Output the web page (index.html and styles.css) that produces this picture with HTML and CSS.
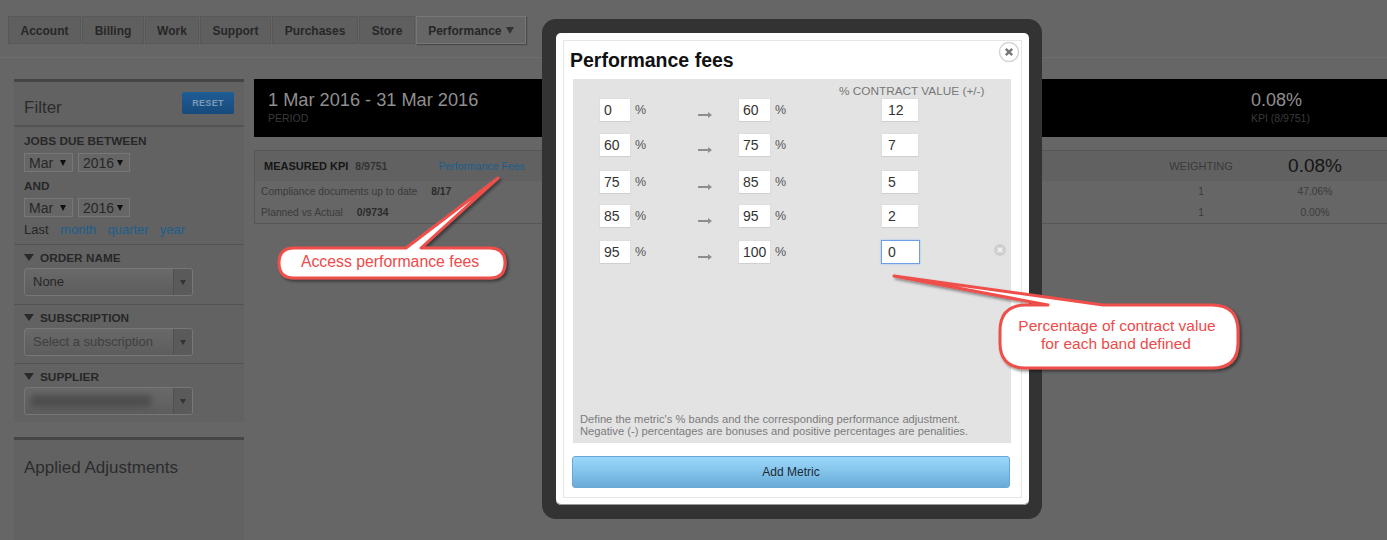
FILE: index.html
```html
<!DOCTYPE html>
<html lang="en">
<head>
<meta charset="utf-8">
<title>Performance fees</title>
<link rel="stylesheet" href="styles.css">
</head>
<body>
<nav class="nav">
  <a class="tab tab-account">Account</a>
  <a class="tab tab-billing">Billing</a>
  <a class="tab tab-work">Work</a>
  <a class="tab tab-support">Support</a>
  <a class="tab tab-purchases">Purchases</a>
  <a class="tab tab-store">Store</a>
  <a class="tab tab-active">Performance <i class="tri tri-tab"></i></a>
</nav>
<div class="main">
  <aside class="side">
    <section class="card">
      <div class="filter-head"><h2 class="side-title">Filter</h2><button class="reset">RESET</button></div>
      <div class="dates">
        <div class="label">JOBS DUE BETWEEN</div>
        <div class="date-row"><span class="mini mini-m">Mar<i class="tri tri-mini"></i></span><span class="mini mini-y">2016<i class="tri tri-mini"></i></span></div>
        <div class="label label-and">AND</div>
        <div class="date-row"><span class="mini mini-m">Mar<i class="tri tri-mini"></i></span><span class="mini mini-y">2016<i class="tri tri-mini"></i></span></div>
        <div class="last">Last <a>month</a> <a>quarter</a> <a>year</a></div>
      </div>
      <div class="group">
        <div class="label"><i class="tri tri-label"></i>ORDER NAME</div>
        <div class="combo"><span class="combo-val">None</span><span class="combo-btn"><i class="tri tri-combo"></i></span></div>
      </div>
      <div class="group">
        <div class="label"><i class="tri tri-label"></i>SUBSCRIPTION</div>
        <div class="combo"><span class="combo-val combo-ph">Select a subscription</span><span class="combo-btn"><i class="tri tri-combo"></i></span></div>
      </div>
      <div class="group">
        <div class="label"><i class="tri tri-label"></i>SUPPLIER</div>
        <div class="combo"><span class="combo-val"><span class="blurred"></span></span><span class="combo-btn"><i class="tri tri-combo"></i></span></div>
      </div>
    </section>
    <section class="card card-adj"><h2 class="side-title">Applied Adjustments</h2></section>
  </aside>
  <div class="content">
    <div class="hero">
      <div><div class="hero-big">1 Mar 2016 - 31 Mar 2016</div><div class="hero-small">PERIOD</div></div>
      <div class="hero-kpi"><div class="kpi-big">0.08%</div><div class="hero-small">KPI (8/9751)</div></div>
    </div>
    <div class="table">
      <div class="thead">
        <div class="cell-main"><b class="m-title">MEASURED KPI</b><b class="m-num">8/9751</b><a class="m-link">Performance Fees</a></div>
        <div class="cell-w cell-w-h">WEIGHTING</div>
        <div class="cell-p cell-p-h">0.08%</div>
      </div>
      <div class="trow">
        <div class="cell-main">Compliance documents up to date<b class="r-num">8/17</b></div>
        <div class="cell-w">1</div><div class="cell-p">47.06%</div>
      </div>
      <div class="trow">
        <div class="cell-main">Planned vs Actual<b class="r-num">0/9734</b></div>
        <div class="cell-w">1</div><div class="cell-p">0.00%</div>
      </div>
    </div>
  </div>
</div>

<div class="modal-frame">
  <div class="modal">
    <svg class="close" width="22" height="22" viewBox="0 0 22 22"><circle cx="11" cy="11" r="9.5" fill="#fff" stroke="#d6d6d6" stroke-width="1.6"/><path d="M7.8 7.8 14.2 14.2M14.2 7.8 7.8 14.2" stroke="#777" stroke-width="2.4"/></svg>
    <div class="modal-inner">
      <h1 class="modal-title">Performance fees</h1>
      <div class="panel">
        <div class="pct-head">% CONTRACT VALUE (+/-)</div>
        <div class="bands">
          <span class="pair"><span class="inp">0</span>%</span><svg class="arrow" width="14" height="6" viewBox="0 0 14 6"><path d="M0 2h10V0l4 3-4 3V4H0z" fill="#8e8e8e"/></svg><span class="pair"><span class="inp">60</span>%</span><span class="inp inp-c">12</span>
          <span class="pair"><span class="inp">60</span>%</span><svg class="arrow" width="14" height="6" viewBox="0 0 14 6"><path d="M0 2h10V0l4 3-4 3V4H0z" fill="#8e8e8e"/></svg><span class="pair"><span class="inp">75</span>%</span><span class="inp inp-c">7</span>
          <span class="pair"><span class="inp">75</span>%</span><svg class="arrow" width="14" height="6" viewBox="0 0 14 6"><path d="M0 2h10V0l4 3-4 3V4H0z" fill="#8e8e8e"/></svg><span class="pair"><span class="inp">85</span>%</span><span class="inp inp-c">5</span>
          <span class="pair"><span class="inp">85</span>%</span><svg class="arrow" width="14" height="6" viewBox="0 0 14 6"><path d="M0 2h10V0l4 3-4 3V4H0z" fill="#8e8e8e"/></svg><span class="pair"><span class="inp">95</span>%</span><span class="inp inp-c">2</span>
          <span class="pair"><span class="inp">95</span>%</span><svg class="arrow" width="14" height="6" viewBox="0 0 14 6"><path d="M0 2h10V0l4 3-4 3V4H0z" fill="#8e8e8e"/></svg><span class="pair"><span class="inp">100</span>%</span><span class="inp inp-c inp-focus">0<svg class="del" width="12" height="12" viewBox="0 0 12 12"><circle cx="6" cy="6" r="6" fill="#cfcfcf"/><path d="M3.8 3.8 8.2 8.2M8.2 3.8 3.8 8.2" stroke="#f1f1f1" stroke-width="1.8"/></svg></span>
        </div>
        <p class="note">Define the metric's % bands and the corresponding performance adjustment.<br>Negative (-) percentages are bonuses and positive percentages are penalities.</p>
      </div>
      <button class="add">Add Metric</button>
    </div>
  </div>
</div>

<svg class="annot" width="1387" height="540" viewBox="0 0 1387 540">
  <defs><filter id="sh" x="-20%" y="-20%" width="140%" height="140%"><feDropShadow dx="2" dy="2" stdDeviation="1.5" flood-color="#000" flood-opacity=".45"/></filter></defs>
  <path filter="url(#sh)" d="M498 178 421 248H490Q505 248 505 263 505 278 490 278H294Q279 278 279 263 279 248 294 248H406Z" fill="#fff" stroke="#ef4f4c" stroke-width="3" stroke-linejoin="round"/>
  <text class="ann-text" x="390" y="267" text-anchor="middle">Access performance fees</text>
  <path filter="url(#sh)" d="M894 276 1103 305H1212Q1238 305 1238 331V343Q1238 368 1212 368H1026Q1000 368 1000 343V331Q1000 305 1026 305H1048Z" fill="#fff" stroke="#ef4f4c" stroke-width="3" stroke-linejoin="round"/>
  <text class="ann-text ann-text2" x="1117" y="331" text-anchor="middle">Percentage of contract value</text>
  <text class="ann-text ann-text2" x="1116" y="349" text-anchor="middle">for each band defined</text>
</svg>
</body>
</html>
```
FILE: styles.css
```css
* { box-sizing: border-box; }
html, body { margin: 0; height: 540px; overflow: hidden; }
body { background: #666; font-family: "Liberation Sans", Arial, sans-serif; color: #222; position: relative; }
a { color: #1a5f8e; }

.nav { display: flex; gap: 1px; height: 58px; padding: 16px 0 0 8px; border-bottom: 1px solid #6e6e6e; }
.tab { height: 28px; line-height: 28px; background: #5f5f5f; border: 1px solid #585858; color: #272727; font-size: 12px; font-weight: bold; text-align: center; }
.tab-account { width: 73px; }
.tab-billing { width: 62px; }
.tab-work { width: 54px; }
.tab-support { width: 71px; }
.tab-purchases { width: 86px; }
.tab-store { width: 56px; }
.tab-active { width: 110px; background: #666; border: 1px solid #777; box-shadow: 1px 1px 1px #4a4a4a; color: #272727; }
.tri { display: inline-block; width: 0; height: 0; border-style: solid; border-color: #333 transparent transparent; }
.tri-tab { border-width: 7px 4.5px 0; margin-left: 1px; vertical-align: 1px; }
.tri-mini { border-width: 6px 3.5px 0; border-top-color: #111; }
.tri-label { border-width: 7px 5px 0; border-top-color: #2a2a2a; margin-right: 6px; vertical-align: 1px; }
.tri-combo { border-width: 5px 3px 0; border-top-color: #333; }

.main { display: flex; padding: 21px 0 0 14px; gap: 10px; }
.side { width: 230px; flex: none; display: flex; flex-direction: column; gap: 15px; }
.card { background: #626262; border-top: 3px solid #454545; }
.card-adj { height: 120px; padding: 18px 10px 0; }
.side-title { margin: 0; font-size: 17px; font-weight: normal; color: #2c2c2c; }
.filter-head { height: 45px; padding: 10px 10px 0; display: flex; justify-content: space-between; align-items: flex-start; border-bottom: 2px solid #545454; }
.filter-head .side-title { padding-top: 6px; }
.reset { width: 52px; height: 22px; padding: 0; border: 0; border-radius: 2px; background: linear-gradient(#1f5d96, #174a7c); color: #7f9ab4; font: bold 9px "Liberation Sans", Arial, sans-serif; letter-spacing: .3px; }
.dates { height: 117px; padding: 7px 10px 0; }
.label { font-size: 11.8px; font-weight: bold; line-height: 15px; color: #272727; }
.label-and { margin-top: 7px; }
.date-row { display: flex; gap: 5px; margin-top: 4px; }
.mini { height: 19px; display: flex; align-items: center; justify-content: space-between; padding: 0 6px 0 4px; background: #666; border: 1px solid #777; font-size: 14px; color: #262626; }
.mini-m { width: 49px; }
.mini-y { width: 52px; }
.last { margin-top: 4px; font-size: 13px; line-height: 17px; color: #262626; }
.last a { margin-left: 7.5px; }
.last a:first-child { margin-left: 8px; }
.group { height: 60px; padding: 6px 10px 0; border-top: 1px solid #535353; }
.group + .group { height: 59px; }
.combo { display: flex; width: 169px; height: 28px; margin-top: 2px; background: linear-gradient(#696969, #5d5d5d); border: 1px solid #777; border-radius: 3px; }
.combo-val { flex: 1; padding-left: 8px; font-size: 13px; line-height: 25px; color: #272727; }
.combo-ph { color: #3f3f3f; }
.combo-btn { width: 19px; display: flex; align-items: center; justify-content: center; background: #5a5a5a; border-left: 1px solid #505050; border-radius: 0 3px 3px 0; }
.blurred { display: block; width: 120px; height: 12px; margin: 7px 0 0 -2px; background: #4d4d4d; filter: blur(3px); }

.content { flex: 1; }
.hero { height: 58px; background: #000; padding: 11px 77px 0 14px; display: flex; justify-content: space-between; }
.hero-big { font-size: 18.2px; line-height: 21px; color: #8f8f8f; }
.hero-small { font-size: 10.5px; line-height: 14px; color: #3a3a3a; }
.hero-kpi { width: 59px; white-space: nowrap; }
.kpi-big { font-size: 18px; line-height: 21px; color: #8f8f8f; }
.table { margin-top: 13px; border: 1px solid #565656; border-width: 1px 0 1px 1px; height: 74px; font-size: 10.3px; color: #3b3b3b; }
.thead { height: 30px; display: flex; align-items: center; background: #616161; }
.trow { height: 21px; display: flex; align-items: center; }
.cell-main { flex: 1; padding-left: 6px; }
.thead .cell-main { padding-left: 9px; display: flex; align-items: baseline; }
.m-title { font-size: 11px; color: #161616; }
.m-num { margin-left: 7px; color: #333; font-size: 10.5px; font-weight: bold; }
.m-link { margin-left: 51px; font-size: 10.5px; }
.r-num { margin-left: 14px; font-size: 10.3px; color: #2a2a2a; }
.cell-w { width: 64px; text-align: center; margin-right: 55px; }
.cell-w-h { font-size: 11px; color: #3a3a3a; }
.cell-p { width: 54px; text-align: center; margin-right: 45px; }
.cell-p-h { font-size: 19px; color: #141414; }

.modal-frame { position: absolute; left: 542px; top: 19px; width: 500px; height: 500px; padding: 14px 13px 14px 14px; background: #333; border-radius: 14px; }
.modal { position: relative; height: 100%; padding: 7px 7px; background: #fff; border-radius: 5px; box-shadow: inset 0 -1px 0 #999; }
.close { position: absolute; right: 9px; top: 8px; }
.modal-inner { height: 100%; padding: 7px 11px 0 6px; border: 1px solid #e6e6e6; }
.modal-title { margin: 0; font-size: 19.5px; line-height: 24px; color: #111; }
.panel { display: flex; flex-direction: column; height: 364px; width: 438px; margin: 7px 0 0 3px; background: #e3e3e3; position: relative; }
.pct-head { height: 19px; padding: 5px 0 0 266px; font-size: 11.8px; line-height: 14px; color: #777; white-space: nowrap; }
.bands { display: grid; grid-template-columns: 99px 40px 143px 1fr; grid-template-rows: 35px 37px 34px 36px 24px; padding-left: 26px; align-items: start; }
.pair { display: flex; align-items: center; gap: 4px; font-size: 12.5px; color: #555; }
.inp { display: block; width: 32px; height: 24px; padding-left: 4px; background: #fff; border: 1px solid #dedede; border-bottom-color: #cfcfcf; font-size: 14px; line-height: 22px; color: #333; }
.pair:nth-child(4n+3) .inp { width: 33px; }
.inp-c { width: 38px; padding-left: 6px; position: relative; }
.inp-focus { width: 39px; border: 1px solid #6d9ee8; box-shadow: 0 0 2px #9fc0f0; }
.arrow { margin-top: 14px; }
.del { position: absolute; left: 112px; top: 3px; }
.note { margin: auto 0 0; padding: 0 6px 6px 7px; font-size: 11.2px; line-height: 12px; color: #7b7b7b; white-space: nowrap; }
.add { display: block; width: 438px; height: 32px; margin: 13px 0 0 2px; padding: 0; border: 1px solid #6ba7d6; border-radius: 3px; background: linear-gradient(#9cd8fc, #69acd8); font: 12px "Liberation Sans", Arial, sans-serif; color: #1d2a35; }

.annot { position: absolute; left: 0; top: 0; }
.ann-text { font-size: 15.8px; fill: #ee4a4a; }
.ann-text2 { font-size: 15.5px; }
```
